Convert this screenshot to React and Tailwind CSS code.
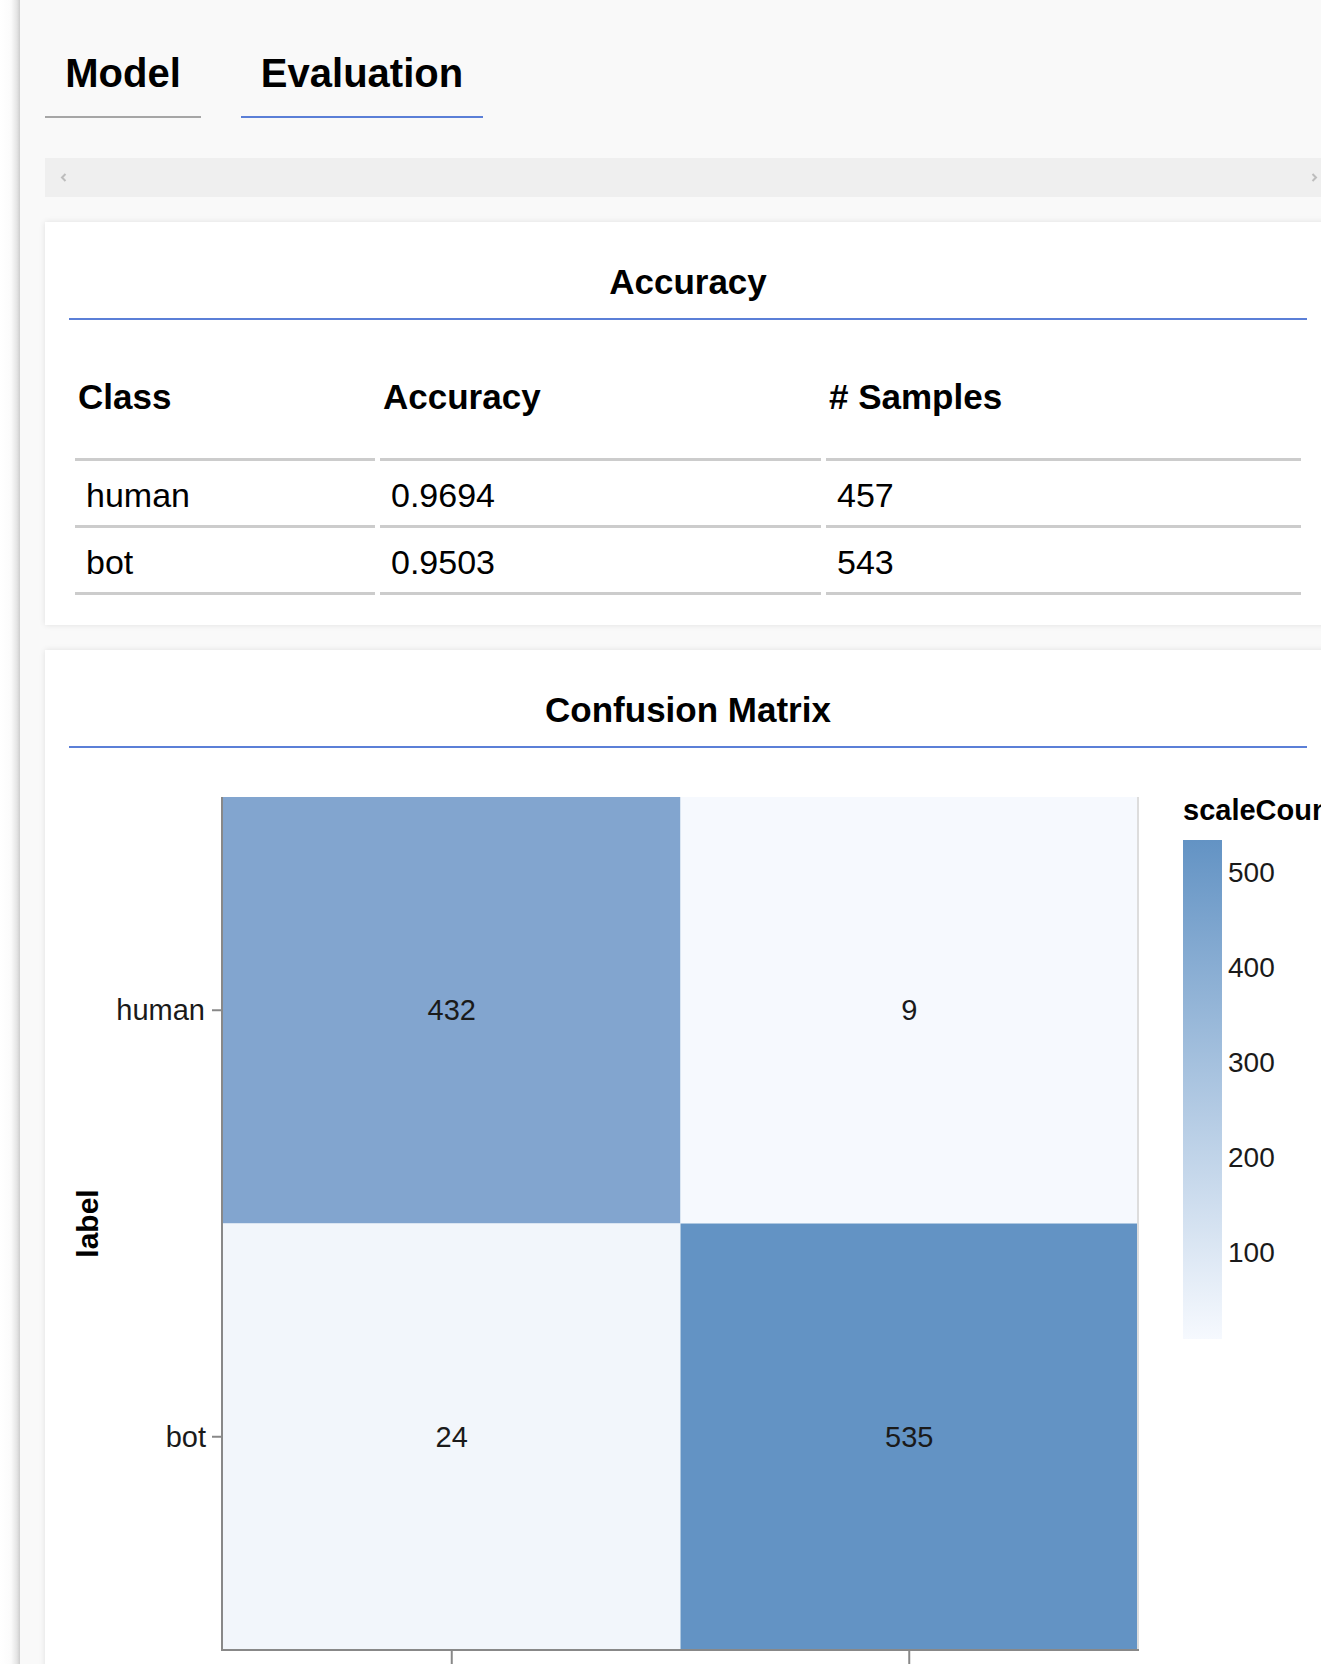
import React from "react";

function Chevron({ dir }) {
  return (
    <svg width="7" height="9" viewBox="0 0 7 9" className="block">
      {dir === "left" ? (
        <path d="M5.5 1 L2 4.5 L5.5 8" fill="none" stroke="#bdbdbd" strokeWidth="2" />
      ) : (
        <path d="M1.5 1 L5 4.5 L1.5 8" fill="none" stroke="#bdbdbd" strokeWidth="2" />
      )}
    </svg>
  );
}

function ConfusionChart() {
  const x0 = 154, xm = 611.5, x1 = 1069;
  const y0 = 49, ym = 475.5, y1 = 902;
  const cx1 = (x0 + xm) / 2, cx2 = (xm + x1) / 2;
  const cy1 = (y0 + ym) / 2, cy2 = (ym + y1) / 2;
  const legendLabels = [
    { v: "500", y: 124 },
    { v: "400", y: 219 },
    { v: "300", y: 314 },
    { v: "200", y: 409 },
    { v: "100", y: 504 },
  ];
  return (
    <svg width="1262" height="930" className="block overflow-visible" style={{ fontFamily: "'Liberation Sans', Arial, sans-serif" }}>
      <defs>
        <linearGradient id="lg" x1="0" y1="0" x2="0" y2="1">
          <stop offset="0" stopColor="#6393c4" />
          <stop offset="1" stopColor="#f6f9fe" />
        </linearGradient>
      </defs>
      <rect x={x0} y={y0} width={xm - x0} height={ym - y0} fill="#82a5cf" />
      <rect x={xm} y={y0} width={x1 - xm} height={ym - y0} fill="#f6f9fe" />
      <rect x={x0} y={ym} width={xm - x0} height={y1 - ym} fill="#f2f6fb" />
      <rect x={xm} y={ym} width={x1 - xm} height={y1 - ym} fill="#6393c4" />
      <line x1={x1} y1={y0} x2={x1} y2={y1} stroke="#dddddd" strokeWidth="2" />
      <line x1={x0 - 1} y1={y0} x2={x0 - 1} y2={y1 + 1} stroke="#888888" strokeWidth="2" />
      <line x1={x0 - 2} y1={y1} x2={x1 + 1} y2={y1} stroke="#888888" strokeWidth="2" />
      <line x1={143} y1={cy1} x2={x0 - 1} y2={cy1} stroke="#888888" strokeWidth="2" />
      <line x1={143} y1={cy2} x2={x0 - 1} y2={cy2} stroke="#888888" strokeWidth="2" />
      <line x1={cx1} y1={y1} x2={cx1} y2={y1 + 16} stroke="#888888" strokeWidth="2" />
      <line x1={cx2} y1={y1} x2={cx2} y2={y1 + 16} stroke="#888888" strokeWidth="2" />

      <text x="136" y={cy1} textAnchor="end" dominantBaseline="central" fontSize="29" fill="#1a1a1a">human</text>
      <text x="137" y={cy2} textAnchor="end" dominantBaseline="central" fontSize="29" fill="#1a1a1a">bot</text>

      <text x={cx1} y={cy1} textAnchor="middle" dominantBaseline="central" fontSize="29" fill="#1a1a1a">432</text>
      <text x={cx2} y={cy1} textAnchor="middle" dominantBaseline="central" fontSize="29" fill="#1a1a1a">9</text>
      <text x={cx1} y={cy2} textAnchor="middle" dominantBaseline="central" fontSize="29" fill="#1a1a1a">24</text>
      <text x={cx2} y={cy2} textAnchor="middle" dominantBaseline="central" fontSize="29" fill="#1a1a1a">535</text>

      <text x="0" y="0" transform="translate(18.5 475.5) rotate(-90)" textAnchor="middle" dominantBaseline="central" fontSize="30" fontWeight="bold" fill="#000">label</text>

      <text x="1114" y="72" fontSize="29" fontWeight="bold" fill="#000">scaleCount</text>
      <rect x="1114" y="92" width="39" height="499" fill="url(#lg)" />
      {legendLabels.map((l) => (
        <text key={l.v} x="1159" y={l.y} dominantBaseline="central" fontSize="28" fill="#1a1a1a">{l.v}</text>
      ))}
    </svg>
  );
}

export default function App() {
  const rows = [
    ["human", "0.9694", "457"],
    ["bot", "0.9503", "543"],
  ];
  const headCell = "pt-[21px] pb-[41px] leading-[40px] text-[35px] font-bold border-b-[3px] border-[#cccccc] pl-[3px]";
  const bodyCell = "pt-[9px] pb-[10px] leading-[40px] text-[34px] border-b-[3px] border-[#cccccc] pl-[11px]";
  return (
    <div className="w-[1321px] h-[1664px] overflow-hidden flex bg-[#f9f9f9] text-black font-['Liberation_Sans',Arial,sans-serif]">
      <div className="w-[20px] shrink-0 h-full bg-[linear-gradient(to_right,#ffffff_0px,#fbfbfb_11px,#e4e4e4_17px,#cdcdcd_20px)]" />
      <div className="w-[1286px] shrink-0 ml-[25px]">
        <div className="flex gap-[40px] pt-[50px]">
          <div className="w-[156px] text-center text-[40px] font-bold leading-[46px] pb-[20px] border-b-2 border-[#a6a6a6]">Model</div>
          <div className="w-[242px] text-center text-[40px] font-bold leading-[46px] pb-[20px] border-b-2 border-[#5b7fd7]">Evaluation</div>
        </div>

        <div className="mt-[40px] h-[39px] bg-[#efefef] flex items-center justify-between pl-[15px] pr-[13px]">
          <Chevron dir="left" />
          <Chevron dir="right" />
        </div>

        <div className="mt-[25px] bg-white shadow-[0_0_6px_rgba(0,0,0,0.10)] px-[24px] pt-[40px] pb-[30px]">
          <div className="text-center text-[35px] font-bold leading-[40px] pb-[16px] border-b-2 border-[#5b7fd7]">Accuracy</div>
          <div className="mt-[36px] px-[6px] grid grid-cols-[300px_441px_475px] gap-x-[5px] gap-y-[5px]">
            <div className={headCell}>Class</div>
            <div className={headCell}>Accuracy</div>
            <div className={headCell}># Samples</div>
            {rows.map((r) =>
              r.map((c, i) => (
                <div key={r[0] + i} className={bodyCell}>{c}</div>
              ))
            )}
          </div>
        </div>

        <div className="mt-[25px] bg-white shadow-[0_0_6px_rgba(0,0,0,0.10)] px-[24px] pt-[40px] pb-[30px]">
          <div className="text-center text-[35px] font-bold leading-[40px] pb-[16px] border-b-2 border-[#5b7fd7]">Confusion Matrix</div>
          <ConfusionChart />
        </div>
      </div>
    </div>
  );
}
